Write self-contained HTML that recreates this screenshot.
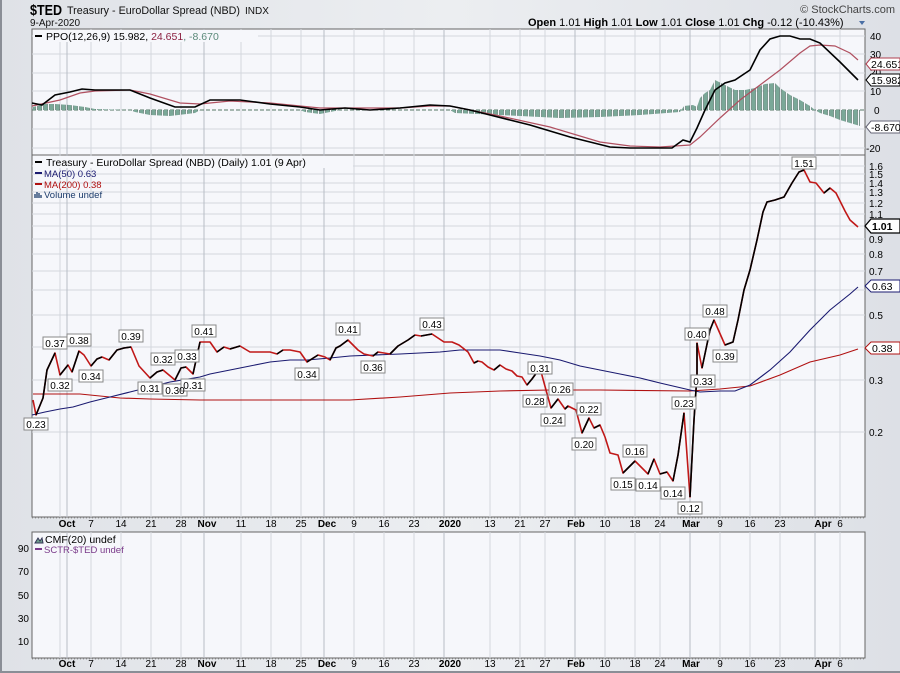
<!DOCTYPE html>
<html><head><meta charset="utf-8"><style>
body{margin:0;width:900px;height:673px;overflow:hidden;background:#e6e8ec;}
svg{display:block;font-family:"Liberation Sans",sans-serif;}
</style></head><body>
<svg width="900" height="673" viewBox="0 0 900 673" xmlns="http://www.w3.org/2000/svg">
<defs>
<linearGradient id="bg" x1="0" y1="0" x2="1" y2="0"><stop offset="0" stop-color="#dfe2e7"/><stop offset="0.5" stop-color="#eceef1"/><stop offset="1" stop-color="#dde0e6"/></linearGradient>
<pattern id="bars" x="1" y="0" width="6" height="200" patternUnits="userSpaceOnUse"><rect x="0.5" y="0" width="4" height="200" fill="#7aa898" stroke="#3f5f54" stroke-width="0.5"/></pattern>
<clipPath id="hist"><polygon points="33,110 33,107 45,104 55,104 70,105 85,107 95,109 130,110 135,112 150,115 170,116 195,113 200,110 300,110 305,112 320,114 330,112 340,110 450,110 455,113 500,115 560,118 600,117 640,115 680,112 684,106 693,105 697,107 700,98 705,93 710,90 715,80 725,85 735,90 745,90 755,88 765,84 775,83 780,88 790,95 800,100 810,106 815,110 820,113 830,116 840,120 850,123 860,126 860,110"/></clipPath>
</defs>
<rect width="900" height="673" fill="url(#bg)"/>
<rect x="0" y="0" width="2" height="673" fill="#8a8e96"/>
<rect x="0" y="671" width="900" height="2" fill="#8a8e96"/>
<!-- header -->
<text x="30" y="15" font-size="15" font-weight="bold" fill="#000" textLength="32" lengthAdjust="spacingAndGlyphs">$TED</text>
<text x="67" y="14" font-size="11" fill="#111" textLength="173" lengthAdjust="spacingAndGlyphs">Treasury - EuroDollar Spread (NBD)</text>
<text x="245" y="14" font-size="10" fill="#111">INDX</text>
<text x="30" y="26" font-size="10" fill="#111">9-Apr-2020</text>
<text x="895" y="13" font-size="11" fill="#444" text-anchor="end">© StockCharts.com</text>
<text x="528" y="26" font-size="11" fill="#000"><tspan font-weight="bold">Open</tspan> 1.01  <tspan font-weight="bold">High</tspan> 1.01  <tspan font-weight="bold">Low</tspan> 1.01  <tspan font-weight="bold">Close</tspan> 1.01  <tspan font-weight="bold">Chg</tspan> -0.12 (-10.43%)</text>
<polygon points="859,21 865,21 862,25" fill="#4a6fa5"/>
<!-- panels -->
<rect x="32" y="29" width="833" height="126" fill="#f6f7fb" stroke="#666"/>
<rect x="32" y="155" width="833" height="362" fill="#f6f7fb" stroke="#666"/>
<rect x="32" y="532" width="833" height="126" fill="#f6f7fb" stroke="#666"/>
<g stroke="#d4d7de" stroke-width="1">
<path d="M60 29V517M91 29V517M121 29V517M151 29V517M181 29V517M241 29V517M271 29V517M301 29V517M354 29V517M384 29V517M414 29V517M490 29V517M520 29V517M545 29V517M605 29V517M635 29V517M660 29V517M720 29V517M750 29V517M780 29V517M840 29V517"/>
<path d="M60 532V658M91 532V658M121 532V658M151 532V658M181 532V658M241 532V658M271 532V658M301 532V658M354 532V658M384 532V658M414 532V658M490 532V658M520 532V658M545 532V658M605 532V658M635 532V658M660 532V658M720 532V658M750 532V658M780 532V658M840 532V658"/>
<path d="M32 36H865M32 54H865M32 73H865M32 91H865M32 129H865M32 148H865"/>
<path d="M32 166H865M32 174H865M32 183H865M32 192H865M32 203H865M32 214H865M32 226H865M32 239H865M32 254H865M32 271H865M32 290H865M32 315H865M32 347H865M32 380H865M32 432H865"/>
</g>
<g stroke="#b8bcc6" stroke-width="1">
<path d="M67 29V517M204 29V517M324 29V517M444 29V517M575 29V517M690 29V517M815 29V517"/>
<path d="M67 532V658M204 532V658M324 532V658M444 532V658M575 532V658M690 532V658M815 532V658"/>
</g>
<!-- PPO -->
<line x1="32" y1="110" x2="865" y2="110" stroke="#557766" stroke-dasharray="4,2"/>
<rect x="30" y="70" width="835" height="70" fill="url(#bars)" clip-path="url(#hist)"/>
<polyline fill="none" stroke="#b05060" stroke-width="1.2" points="32,106 60,100 80,93 95,91 130,90 150,94 180,103 200,104 230,101 270,103 320,108 400,108 430,106 450,106 500,116 550,127 600,142 630,146 660,147 690,145 700,137 720,118 740,100 760,85 780,70 800,53 810,46 820,45 835,46 850,53 858,60"/>
<polyline fill="none" stroke="#000" stroke-width="1.6" points="32,103 42,105 55,95 70,92 82,89 95,90 130,90 150,98 175,107 195,107 210,100 240,100 270,104 300,107 320,110 345,108 370,110 400,108 430,105 450,106 470,110 490,115 510,120 530,125 550,131 570,137 590,142 610,147 630,148 672,148 683,140 690,142 697,128 705,110 715,90 725,83 735,80 750,70 760,50 770,39 780,36 790,36 800,39 810,39 820,43 840,62 858,80"/>
<rect x="33" y="30" width="225" height="12" fill="#f6f7fb"/>
<path d="M35 36h7" stroke="#000" stroke-width="2"/>
<text x="46" y="40" font-size="10.5" fill="#000">PPO(12,26,9) 15.982, <tspan fill="#8b2040">24.651</tspan><tspan fill="#5b8a7a">, -8.670</tspan></text>
<g font-size="10" fill="#000">
<text x="870" y="40">40</text><text x="870" y="58">30</text><text x="870" y="76">20</text><text x="870" y="95">10</text><text x="874" y="114">0</text><text x="866" y="152">-20</text>
</g>
<g font-size="10.5">
<polygon points="866,64 871,58 900,58 900,70 871,70" fill="#fff" stroke="#b04050"/><text x="871" y="68" fill="#000">24.651</text>
<polygon points="866,80 871,74 900,74 900,86 871,86" fill="#fff" stroke="#000"/><text x="871" y="84" fill="#000">15.982</text>
<polygon points="866,127 871,121 900,121 900,133 871,133" fill="#fff" stroke="#667"/><text x="871" y="131" fill="#000">-8.670</text>
</g>
<!-- price MAs -->
<polyline fill="none" stroke="#b01010" stroke-width="1.1" points="33,394 80,394 120,398 150,399 200,400 300,400 350,400 400,397 450,393 500,391 550,390 600,390 690,391 720,389 750,386 780,375 810,362 840,355 858,349"/>
<polyline fill="none" stroke="#1a1a70" stroke-width="1.1" points="32,415 45,412 60,409 73,407 90,402 110,397 130,392 150,387 170,382 200,377 210,374 230,370 250,366 270,362 290,360 307,360 330,358 350,356 400,354 440,352 460,350 500,350 520,353 540,356 560,360 580,366 600,370 620,374 640,378 660,383 690,390 700,392 720,391 735,391 750,385 770,370 790,352 810,330 830,310 850,294 858,287"/>
<!-- price -->
<polyline fill="none" stroke="#c01818" stroke-width="1.6" stroke-linejoin="round" points="33,400 36,415 43,398 47,370 55,353 60,375 68,365 72,372 79,351 84,355 91,366 97,359 102,357 109,360 117,350 124,348 131,347 139,366 150,378 157,372 163,370 175,380 181,368 186,367 193,374 200,342 210,342 217,352 224,347 230,349 240,346 250,352 270,352 277,354 283,350 290,350 300,352 307,362 318,355 325,357 330,360 336,348 340,346 348,340 358,350 364,354 373,356 378,352 390,354 398,346 408,340 415,335 421,336 432,334 444,342 452,342 459,345 468,352 474,363 478,361 482,362 488,367 494,370 500,365 506,369 512,371 517,376 522,377 527,385 532,379 540,368 546,390 551,408 558,399 565,409 568,406 576,410 582,433 589,418 594,428 600,425 605,437 610,453 618,455 623,473 635,461 648,474 654,459 660,474 667,472 673,481 678,455 684,413 690,497 694,420 697,375 697,343 702,368 710,330 714,320 725,345 733,342 738,320 744,290 750,270 757,240 763,212 767,202 775,200 784,197 792,183 799,172 804,170 810,182 816,183 824,193 830,188 836,193 845,211 850,220 858,227"/>
<g fill="none" stroke="#000" stroke-width="1.6" stroke-linejoin="round">
<polyline points="36,415 43,398 47,370 55,353"/><polyline points="60,375 68,365"/><polyline points="72,372 79,351"/><polyline points="91,366 97,359 102,357"/><polyline points="109,360 117,350 124,348 131,347"/><polyline points="150,378 157,372 163,370"/><polyline points="175,380 181,368 186,367"/><polyline points="193,374 200,342"/><polyline points="217,352 224,347"/><polyline points="230,349 240,346"/><polyline points="277,354 283,350"/><polyline points="307,362 318,355"/><polyline points="330,360 336,348 340,346 348,340"/><polyline points="373,356 378,352"/><polyline points="390,354 398,346 408,340 415,335"/><polyline points="421,336 432,334"/><polyline points="474,363 478,361"/><polyline points="494,370 500,365"/><polyline points="527,385 532,379 540,368"/><polyline points="551,408 558,399"/><polyline points="565,409 568,406"/><polyline points="582,433 589,418"/><polyline points="594,428 600,425"/><polyline points="623,473 635,461"/><polyline points="648,474 654,459"/><polyline points="660,474 667,472"/><polyline points="673,481 678,455 684,413"/><polyline points="690,497 694,420 697,375 697,343"/><polyline points="702,368 710,330 714,320"/><polyline points="725,345 733,342 738,320 744,290 750,270 757,240 763,212 767,202 775,200 784,197 792,183 799,172 804,170"/><polyline points="824,193 830,188"/>
</g>
<!-- price labels -->
<g font-size="10" fill="#000" text-anchor="middle">
<g fill="#fff" stroke="#888">
<rect x="24" y="418" width="24" height="12"/><rect x="43" y="337" width="24" height="12"/><rect x="48" y="379" width="24" height="12"/><rect x="67" y="334" width="24" height="12"/><rect x="79" y="370" width="24" height="12"/><rect x="119" y="330" width="24" height="12"/><rect x="138" y="382" width="24" height="12"/><rect x="151" y="353" width="24" height="12"/><rect x="163" y="384" width="24" height="12"/><rect x="175" y="350" width="24" height="12"/><rect x="181" y="379" width="24" height="12"/><rect x="192" y="325" width="24" height="12"/><rect x="295" y="368" width="24" height="12"/><rect x="336" y="323" width="24" height="12"/><rect x="361" y="361" width="24" height="12"/><rect x="420" y="318" width="24" height="12"/><rect x="523" y="395" width="24" height="12"/><rect x="528" y="362" width="24" height="12"/><rect x="541" y="414" width="24" height="12"/><rect x="549" y="383" width="24" height="12"/><rect x="572" y="438" width="24" height="12"/><rect x="577" y="403" width="24" height="12"/><rect x="611" y="478" width="24" height="12"/><rect x="623" y="445" width="24" height="12"/><rect x="636" y="479" width="24" height="12"/><rect x="661" y="487" width="24" height="12"/><rect x="672" y="397" width="24" height="12"/><rect x="678" y="502" width="24" height="12"/><rect x="685" y="328" width="24" height="12"/><rect x="691" y="375" width="24" height="12"/><rect x="703" y="305" width="24" height="12"/><rect x="713" y="350" width="24" height="12"/><rect x="792" y="157" width="24" height="12"/>
</g>
<text x="36" y="428">0.23</text><text x="55" y="347">0.37</text><text x="60" y="389">0.32</text><text x="79" y="344">0.38</text><text x="91" y="380">0.34</text><text x="131" y="340">0.39</text><text x="150" y="392">0.31</text><text x="163" y="363">0.32</text><text x="175" y="394">0.30</text><text x="187" y="360">0.33</text><text x="193" y="389">0.31</text><text x="204" y="335">0.41</text><text x="307" y="378">0.34</text><text x="348" y="333">0.41</text><text x="373" y="371">0.36</text><text x="432" y="328">0.43</text><text x="535" y="405">0.28</text><text x="540" y="372">0.31</text><text x="553" y="424">0.24</text><text x="561" y="393">0.26</text><text x="584" y="448">0.20</text><text x="589" y="413">0.22</text><text x="623" y="488">0.15</text><text x="635" y="455">0.16</text><text x="648" y="489">0.14</text><text x="673" y="497">0.14</text><text x="684" y="407">0.23</text><text x="690" y="512">0.12</text><text x="697" y="338">0.40</text><text x="703" y="385">0.33</text><text x="715" y="315">0.48</text><text x="725" y="360">0.39</text><text x="804" y="167">1.51</text>
</g>
<rect x="33" y="156" width="320" height="12" fill="#f6f7fb"/>
<path d="M35 162h7" stroke="#000" stroke-width="2"/>
<text x="46" y="166" font-size="10.5" fill="#000">Treasury - EuroDollar Spread (NBD) (Daily) 1.01 (9 Apr)</text>
<path d="M35 173h7" stroke="#1a1a70" stroke-width="2"/><text x="44" y="177" font-size="9.5" fill="#1a1a70">MA(50) 0.63</text>
<path d="M35 184h7" stroke="#b01010" stroke-width="2"/><text x="44" y="188" font-size="9.5" fill="#b01010">MA(200) 0.38</text>
<path d="M35 194v4M37 192v6M39 193v5M41 195v3" stroke="#1a3a6a" stroke-width="1.3"/><text x="44" y="198" font-size="9.5" fill="#1a3a6a">Volume undef</text>
<g font-size="10" fill="#000">
<text x="869" y="170">1.6</text><text x="869" y="178">1.5</text><text x="869" y="187">1.4</text><text x="869" y="196">1.3</text><text x="869" y="207">1.2</text><text x="869" y="218">1.1</text><text x="869" y="243">0.9</text><text x="869" y="258">0.8</text><text x="869" y="275">0.7</text><text x="869" y="319">0.5</text><text x="869" y="384">0.3</text><text x="869" y="436">0.2</text>
</g>
<g font-size="10.5">
<polygon points="865,226 871,219 900,219 900,233 871,233" fill="#fff" stroke="#000" stroke-width="1.3"/><text x="872" y="230" font-weight="bold" fill="#000">1.01</text>
<polygon points="865,286 871,280 900,280 900,292 871,292" fill="#fff" stroke="#1a1a70"/><text x="872" y="290" fill="#000">0.63</text>
<polygon points="865,348 871,342 900,342 900,354 871,354" fill="#fff" stroke="#b01010"/><text x="872" y="352" fill="#000">0.38</text>
</g>
<!-- x axis labels -->
<g font-size="10" fill="#000" text-anchor="middle">
<g transform="translate(0,527)">
<text x="67" font-weight="bold">Oct</text><text x="91">7</text><text x="121">14</text><text x="151">21</text><text x="181">28</text><text x="207" font-weight="bold">Nov</text><text x="241">11</text><text x="271">18</text><text x="301">25</text><text x="327" font-weight="bold">Dec</text><text x="354">9</text><text x="384">16</text><text x="414">23</text><text x="450" font-weight="bold">2020</text><text x="490">13</text><text x="520">21</text><text x="545">27</text><text x="576" font-weight="bold">Feb</text><text x="605">10</text><text x="635">18</text><text x="660">24</text><text x="691" font-weight="bold">Mar</text><text x="720">9</text><text x="750">16</text><text x="780">23</text><text x="823" font-weight="bold">Apr</text><text x="840">6</text>
</g>
<g transform="translate(0,667)">
<text x="67" font-weight="bold">Oct</text><text x="91">7</text><text x="121">14</text><text x="151">21</text><text x="181">28</text><text x="207" font-weight="bold">Nov</text><text x="241">11</text><text x="271">18</text><text x="301">25</text><text x="327" font-weight="bold">Dec</text><text x="354">9</text><text x="384">16</text><text x="414">23</text><text x="450" font-weight="bold">2020</text><text x="490">13</text><text x="520">21</text><text x="545">27</text><text x="576" font-weight="bold">Feb</text><text x="605">10</text><text x="635">18</text><text x="660">24</text><text x="691" font-weight="bold">Mar</text><text x="720">9</text><text x="750">16</text><text x="780">23</text><text x="823" font-weight="bold">Apr</text><text x="840">6</text>
</g>
</g>
<path d="M32 518H865M32 659H865" stroke="#999" stroke-dasharray="1,2"/>
<!-- lower panel -->
<path d="M35 543l3-5 2 3 2-3 1 5z" fill="#6f9e8c" stroke="#335"/>
<text x="45" y="543" font-size="10.5" fill="#000">CMF(20) undef</text>
<path d="M35 549h7" stroke="#7a3a8a" stroke-width="2"/>
<text x="44" y="553" font-size="9.5" fill="#7a3a8a">SCTR-$TED undef</text>
<g font-size="10" fill="#000" text-anchor="end">
<text x="29" y="552">90</text><text x="29" y="575">70</text><text x="29" y="599">50</text><text x="29" y="622">30</text><text x="29" y="645">10</text>
</g>
</svg>
</body></html>
